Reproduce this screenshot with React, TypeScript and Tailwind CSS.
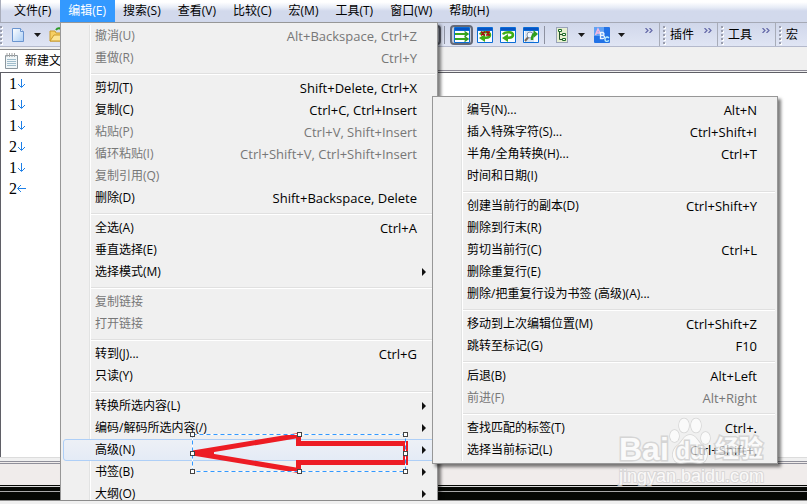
import type { ReactNode } from "react";
import clsx from "clsx";

type Item = {
  label: string;
  keys?: string;
  disabled?: boolean;
  sub?: boolean;
  active?: boolean;
};

const menus = ["文件(F)", "编辑(E)", "搜索(S)", "查看(V)", "比较(C)", "宏(M)", "工具(T)", "窗口(W)", "帮助(H)"];

const editMenu: Item[][] = [
  [
    { label: "撤消(U)", keys: "Alt+Backspace, Ctrl+Z", disabled: true },
    { label: "重做(R)", keys: "Ctrl+Y", disabled: true },
  ],
  [
    { label: "剪切(T)", keys: "Shift+Delete, Ctrl+X" },
    { label: "复制(C)", keys: "Ctrl+C, Ctrl+Insert" },
    { label: "粘贴(P)", keys: "Ctrl+V, Shift+Insert", disabled: true },
    { label: "循环粘贴(I)", keys: "Ctrl+Shift+V, Ctrl+Shift+Insert", disabled: true },
    { label: "复制引用(Q)", disabled: true },
    { label: "删除(D)", keys: "Shift+Backspace, Delete" },
  ],
  [
    { label: "全选(A)", keys: "Ctrl+A" },
    { label: "垂直选择(E)" },
    { label: "选择模式(M)", sub: true },
  ],
  [
    { label: "复制链接", disabled: true },
    { label: "打开链接", disabled: true },
  ],
  [{ label: "转到(J)...", keys: "Ctrl+G" }, { label: "只读(Y)" }],
  [
    { label: "转换所选内容(L)", sub: true },
    { label: "编码/解码所选内容(/)", sub: true },
    { label: "高级(N)", sub: true, active: true },
    { label: "书签(B)", sub: true },
    { label: "大纲(O)", sub: true },
  ],
];

const advancedMenu: Item[][] = [
  [
    { label: "编号(N)...", keys: "Alt+N" },
    { label: "插入特殊字符(S)...", keys: "Ctrl+Shift+I" },
    { label: "半角/全角转换(H)...", keys: "Ctrl+T" },
    { label: "时间和日期(I)" },
  ],
  [
    { label: "创建当前行的副本(D)", keys: "Ctrl+Shift+Y" },
    { label: "删除到行末(R)" },
    { label: "剪切当前行(C)", keys: "Ctrl+L" },
    { label: "删除重复行(E)" },
    { label: "删除/把重复行设为书签 (高级)(A)..." },
  ],
  [
    { label: "移动到上次编辑位置(M)", keys: "Ctrl+Shift+Z" },
    { label: "跳转至标记(G)", keys: "F10" },
  ],
  [
    { label: "后退(B)", keys: "Alt+Left" },
    { label: "前进(F)", keys: "Alt+Right", disabled: true },
  ],
  [
    { label: "查找匹配的标签(T)", keys: "Ctrl+." },
    { label: "选择当前标记(L)", keys: "Ctrl+Shift+," },
  ],
];

const lines = ["1", "1", "1", "2", "1", "2"];

function Menu({ groups, className }: { groups: Item[][]; className: string }) {
  return (
    <div
      role="menu"
      className={clsx(
        "absolute border border-[#979797] bg-[#f0f0f0] p-[2px] shadow-[3px_3px_3px_rgba(0,0,0,0.5)]",
        className
      )}
    >
      <div className="absolute inset-y-[2px] left-[28px] w-[2px] border-l border-[#e2e3e3] bg-white" />
      {groups.map((group, i) => (
        <div key={i} className="relative">
          {i > 0 && (
            <div className="flex h-2 items-end pb-[2px] pl-7">
              <div className="h-[2px] flex-1 border-t border-[#e0e0e0] bg-white" />
            </div>
          )}
          {group.map((item) => (
            <button
              key={item.label}
              role="menuitem"
              disabled={item.disabled}
              className={clsx(
                "flex h-[22px] w-full items-center justify-between rounded-[3px] border pr-[17px] pl-[31px] text-left whitespace-nowrap",
                item.active
                  ? "border-[#aecff7] bg-linear-to-b from-[#edf0f6] to-[#e4ebf6]"
                  : "border-transparent",
                item.disabled ? "text-[#777]" : "text-black"
              )}
            >
              <span>{item.label}</span>
              {item.keys && <span className="text-[13px]">{item.keys}</span>}
              {item.sub && (
                <svg className="mr-[-9px] h-2 w-1" viewBox="0 0 4 8" aria-hidden="true">
                  <path d="M0 0 4 4 0 8Z" fill="#111" />
                </svg>
              )}
            </button>
          ))}
        </div>
      ))}
    </div>
  );
}

function Caret() {
  return (
    <svg className="h-1 w-[7px] shrink-0" viewBox="0 0 7 4" aria-hidden="true">
      <path d="M0 0h7L3.5 4Z" fill="#1a1a1a" />
    </svg>
  );
}

function Grip() {
  return (
    <svg className="h-[22px] w-[3px] shrink-0" viewBox="0 0 3 22" aria-hidden="true">
      {[2, 6, 10, 14, 18].map((y) => (
        <g key={y}>
          <rect x="1" y={y + 1} width="2" height="2" fill="#fff" />
          <rect x="0" y={y} width="2" height="2" fill="#9a9eae" />
        </g>
      ))}
    </svg>
  );
}

function More() {
  return (
    <svg className="mb-2 h-[5px] w-2 shrink-0" viewBox="0 0 8 5" aria-hidden="true">
      <path d="M0.5 0 3 2.5 0.5 5M4.5 0 7 2.5 4.5 5" fill="none" stroke="#6468a8" strokeWidth="1.2" />
    </svg>
  );
}

function ToolButton({ label, pressed, children }: { label: string; pressed?: boolean; children: ReactNode }) {
  return (
    <button
      aria-label={label}
      className={clsx(
        "flex h-5 w-[23px] shrink-0 items-center justify-center rounded-[4px]",
        pressed && "border-2 border-[#666a78] bg-[#c3cad9]"
      )}
    >
      {children}
    </button>
  );
}

function WindowIcon({ children }: { children: ReactNode }) {
  return (
    <svg className="h-4 w-4 shrink-0" viewBox="0 0 16 16" aria-hidden="true">
      <rect width="16" height="16" rx="1" fill="#0a6cd6" />
      <path d="M1 1h14v2H1z" fill="#0754c4" />
      <rect x="1" y="4" width="14" height="11" fill="#fbfdff" />
      {children}
    </svg>
  );
}

function ReturnArrow() {
  return (
    <g>
      <path d="M3 7.500c1-2 3-2.200 6-2.200 5.500 0 5 5.400 0 5.400H7" fill="none" stroke="#3fae14" strokeWidth="2.600" />
      <path d="M8 7v8L2 11Z" fill="#3fae14" />
    </g>
  );
}

function MiniBar({ title }: { title: string }) {
  return (
    <div className="flex w-[58px] shrink-0 items-center border-r border-[#a8acb8] pl-[3px]">
      <Grip />
      <button className="ml-1 whitespace-nowrap">{title}</button>
      <span className="mr-[5px] ml-auto flex">
        <More />
      </span>
    </div>
  );
}

function Toolbar() {
  return (
    <div className="flex h-6 shrink-0 items-stretch overflow-hidden border-b border-[#b4b9cc] bg-linear-to-b from-[#d0d7ea] to-[#e0e5f4]">
      <div className="flex w-[660px] shrink-0 items-center border-r border-[#a8acb8]">
        <Grip />
        <button aria-label="新建" className="ml-2 flex items-center gap-[9px]">
          <svg className="h-4 w-[14px]" viewBox="0 0 14 16" aria-hidden="true">
            <defs>
              <linearGradient id="page" x1="0" y1="0" x2="1" y2="1">
                <stop offset="0" stopColor="#fff" />
                <stop offset="1" stopColor="#a9cdf5" />
              </linearGradient>
            </defs>
            <path d="M1.500 1.500h8L12.500 4.500v10h-11Z" fill="url(#page)" stroke="#6a94cf" />
            <path d="M9.500 1.500v3h3" fill="#dceafc" stroke="#6a94cf" />
          </svg>
          <Caret />
        </button>
        <button aria-label="打开" className="ml-2">
          <svg className="h-4 w-[18px]" viewBox="0 0 18 16" aria-hidden="true">
            <path d="M1 4h5l1 2h7v8H1Z" fill="#f6cf63" stroke="#c99a2c" />
            <path d="M1 14 5 8h12l-4 6Z" fill="#fde594" stroke="#c99a2c" />
            <path d="M7 3c2-3 5-2 6 1" fill="none" stroke="#2d9a27" strokeWidth="2" />
          </svg>
        </button>
        <div className="ml-auto flex items-center">
          <ToolButton label="换行" pressed>
            <span />
          </ToolButton>
          <span className="ml-[3px] h-[18px] w-px bg-[#8d91a0]" />
          <span className="ml-[5px] flex">
            <ToolButton label="不换行" pressed>
              <WindowIcon>
                <path d="M1 7h12M1 12h12" stroke="#36a61c" strokeWidth="2" />
                <path d="M10.500 4.500 14 7l-3.500 2.500M10.500 9.500 14 12l-3.500 2.500" fill="none" stroke="#2a9a20" strokeWidth="1.500" />
              </WindowIcon>
            </ToolButton>
            <ToolButton label="按字符换行">
              <WindowIcon>
                <ReturnArrow />
                <path d="M4 4.500l4 4M8 4.500l-4 4M9 5h4M9 8h4M11 5v3" fill="none" stroke="#a80c0c" strokeWidth="1.500" />
              </WindowIcon>
            </ToolButton>
            <ToolButton label="按窗口换行">
              <WindowIcon>
                <ReturnArrow />
              </WindowIcon>
            </ToolButton>
            <ToolButton label="按页换行">
              <WindowIcon>
                <rect x="2" y="4" width="9" height="11" fill="#d8e4f2" />
                <circle cx="7" cy="8" r="3" fill="#f4faff" stroke="#8396ae" />
                <path d="M5 10.500 2 14" stroke="#7a6a58" strokeWidth="2" />
                <path d="M9 13c0-5 1-6 3-6" fill="none" stroke="#2f9e1c" strokeWidth="2.500" />
                <path d="M10.500 3l4.500 4-4.500 4Z" fill="#2f9e1c" />
              </WindowIcon>
            </ToolButton>
          </span>
          <span className="ml-[2px] h-[18px] w-px bg-[#8d91a0]" />
          <button aria-label="大纲" className="ml-[11px] flex items-center gap-[10px]">
            <svg className="h-4 w-3" viewBox="0 0 12 16" aria-hidden="true">
              <rect x="0.500" y="0.500" width="11" height="15" fill="#e6efd0" stroke="#9aa3b8" />
              <path d="M3.500 5v7.500H7M3.500 7.500H7" fill="none" stroke="#24522a" />
              <path d="M2.500 2.500h3v2h-3zM6.500 6.500h3v2h-3zM6.500 11.500h3v2h-3z" fill="#fff" stroke="#1d6a28" />
            </svg>
            <Caret />
          </button>
          <button aria-label="拼写检查" className="ml-[9px] flex items-center gap-2">
            <svg className="h-4 w-4" viewBox="0 0 16 16" aria-hidden="true">
              <rect width="16" height="16" rx="1" fill="#2272e6" />
              <rect width="10" height="9" fill="#62a2f4" />
              <path d="M1.500 8 4 2l2.500 5M2.500 6h3" fill="none" stroke="#f8b8dc" strokeWidth="1.500" />
              <path d="M6.500 5v6.500h2.500c2 0 2-3 0-3H6.500h2c2 0 2-3 0-3H6.500" fill="none" stroke="#eaf4ff" strokeWidth="1.300" />
              <path d="M15 11c-2-2-4-.5-4 1.500s2 2.500 4 1" fill="none" stroke="#bdf0ff" strokeWidth="1.400" />
            </svg>
            <Caret />
          </button>
          <span className="mr-[6px] ml-5 flex">
            <More />
          </span>
        </div>
      </div>
      <MiniBar title="插件" />
      <MiniBar title="工具" />
      <MiniBar title="宏" />
    </div>
  );
}

// red arrow with its dashed selection box and resize handles
function ArrowMark() {
  const handles = [
    [193, 434], [300, 434], [406, 434],
    [193, 453], [406, 453],
    [193, 471], [300, 471], [406, 471],
  ];
  return (
    <svg className="pointer-events-none absolute top-[430px] left-[188px] h-12 w-[224px]" viewBox="188 430 224 48" aria-hidden="true">
      <path d="M193 453 298.500 435.500V443.500H405.500V462.500H298.500V470.500Z" fill="none" stroke="#ed1c24" strokeWidth="5" />
      <path d="M193 453 214 448.500V457Z" fill="#ed1c24" />
      <rect x="192.500" y="434.500" width="213" height="37" fill="none" stroke="#fff" />
      <rect x="192.500" y="434.500" width="213" height="37" fill="none" stroke="#3399ff" strokeDasharray="4 3" />
      {handles.map(([x, y]) => (
        <rect key={`${x}-${y}`} x={x - 2.5} y={y - 1.5} width="4" height="4" fill="#fff" stroke="#444" />
      ))}
    </svg>
  );
}

function Watermark() {
  return (
    <div className="pointer-events-none absolute top-[416px] left-[619px] w-[150px] font-['Liberation_Sans','Noto_Sans_CJK_SC',sans-serif] text-white opacity-70">
      <div className="flex h-[50px] items-end [-webkit-text-stroke:3px_#cacaca] [paint-order:stroke]">
        <span className="w-[50px] text-[32px] leading-[34px] font-bold">Bai</span>
        <span className="relative flex h-[50px] w-[42px]">
          <svg className="absolute inset-0 h-full w-full" viewBox="0 0 42 50" aria-hidden="true">
            <g fill="#fff" stroke="#cacaca" strokeWidth="1.500">
              <ellipse cx="5.500" cy="20" rx="4.500" ry="6" />
              <ellipse cx="15" cy="9.500" rx="5" ry="7" />
              <ellipse cx="27" cy="9.500" rx="5" ry="7" />
              <ellipse cx="36.500" cy="22" rx="4.500" ry="6" />
              <path d="M21 19c-6 0-7 6-12 10-8 6-6 18 2 18 4 0 6-1 10-1s6 1 10 1c8 0 10-12 2-18-5-4-6-10-12-10Z" />
            </g>
          </svg>
          <span className="relative mt-auto w-full text-center text-[23px] leading-[30px] font-bold">du</span>
        </span>
        <span className="ml-1 text-[24px] leading-[34px] font-bold whitespace-nowrap">经验</span>
      </div>
      <div className="text-[18px] leading-5 [-webkit-text-stroke:2px_#cfcfcf] [paint-order:stroke]">jingyan.baidu.com</div>
    </div>
  );
}

export default function App() {
  return (
    <div className="flex h-screen flex-col overflow-hidden bg-[#f0f0f0] font-['Open_Sans','Noto_Sans_CJK_SC',sans-serif] text-[12px] leading-4 text-black">
      <div className="relative flex flex-1 flex-col overflow-hidden">
        <nav className="flex h-[22px] shrink-0 border-l border-[#a9adbb] bg-linear-to-b from-white from-10% via-[#e6ebf6] via-35% to-[#d2d9ec] to-50% pl-[5px]">
          {menus.map((name) => (
            <button
              key={name}
              className={clsx("pr-[9px] pl-2 whitespace-nowrap", name === "编辑(E)" && "bg-[#3399ff] text-white")}
            >
              {name}
            </button>
          ))}
        </nav>
        <div className="h-px shrink-0 bg-[#a5a9b5]" />
        <Toolbar />
        <div className="flex h-[25px] shrink-0">
          <button className="mt-[2px] flex w-[160px] items-center gap-[7px] border-t border-[#8c8c8c] bg-white pl-[5px]">
            <svg className="h-4 w-[13px] shrink-0" viewBox="0 0 13 16" aria-hidden="true">
              <path d="M0.500 2.500h12v13H0.500Z" fill="#f0f6f8" stroke="#8c979e" />
              <path d="M2 0v4M4.500 0v4M7 0v4M9.500 0v4" stroke="#a5a5a5" />
              <path d="M2 6.500h9M2 8.500h9M2 10.500h9M2 12.500h9" stroke="#9fbccb" />
            </svg>
            <span>新建文本</span>
          </button>
          <div className="mb-px flex-1 border-b border-[#8a8794]" />
        </div>
        <main className="flex-1 border-t border-l border-[#5f5f66] bg-white pl-2 font-['Liberation_Serif',serif] text-[16px]">
          {lines.map((text, i) => (
            <div key={i} className="flex h-[21px] items-center">
              <span>{text}</span>
              <svg
                className={clsx("h-[9px] w-[9px]", i === lines.length - 1 && "rotate-90")}
                viewBox="0 0 9 9"
                aria-hidden="true"
              >
                <path d="M4.500 0v8M1 5l3.500 3.500L8 5" fill="none" stroke="#1e80e8" />
              </svg>
            </div>
          ))}
        </main>
        <div className="h-[5px] shrink-0 border-t border-b border-t-[#dcdcdc] border-b-[#8f8f9a]" />
        <div className="h-[23px] shrink-0 bg-[#f0eceb] pt-px">
          <div className="h-px bg-[#8f8f9a]" />
        </div>
        <div className="flex h-[15px] shrink-0 flex-col gap-1 bg-[#060804] pt-px">
          <div className="h-px bg-[#d8d8d8]" />
          <div className="h-px bg-[#a8a8a8]" />
        </div>

        <Menu groups={editMenu} className="top-[22px] left-[60px] w-[378px]" />
        <Menu groups={advancedMenu} className="top-[96px] left-[432px] w-[346px]" />
        <ArrowMark />
        <Watermark />
      </div>
      <div className="h-1 shrink-0 border-t border-[#8c8c8c] bg-[#f0f0f0]" />
    </div>
  );
}
